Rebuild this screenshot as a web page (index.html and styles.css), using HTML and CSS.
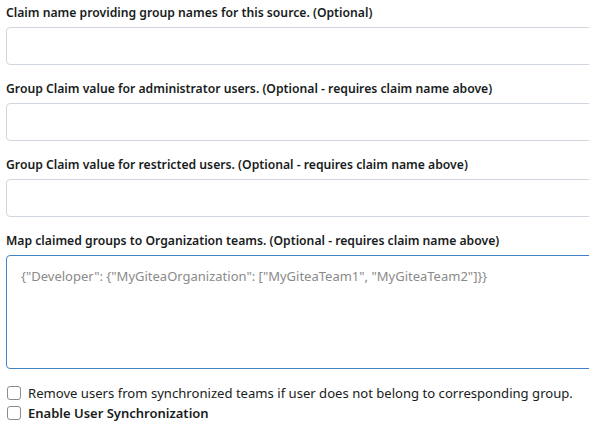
FILE: index.html
```html
<!DOCTYPE html>
<html>

<head>
    <meta charset="utf-8">
    <meta name="viewport" content="width=device-width,initial-scale=1.0">
    <title>Group claims</title>
    <link rel="stylesheet" href="styles.css">
</head>

<body>
    <form class="form">
        <div class="field">
            <label for="group_claim_name">Claim name providing group names for this source. (Optional)</label>
            <input id="group_claim_name" type="text">
        </div>
        <div class="field">
            <label for="admin_group">Group Claim value for administrator users. (Optional - requires claim name above)</label>
            <input id="admin_group" type="text">
        </div>
        <div class="field">
            <label for="restricted_group">Group Claim value for restricted users. (Optional - requires claim name above)</label>
            <input id="restricted_group" type="text">
        </div>
        <div class="field last">
            <label for="group_team_map">Map claimed groups to Organization teams. (Optional - requires claim name above)</label>
            <textarea id="group_team_map" class="focused" placeholder='{"Developer": {"MyGiteaOrganization": ["MyGiteaTeam1", "MyGiteaTeam2"]}}'></textarea>
        </div>
        <div class="checks">
            <label class="checkbox">
                <input type="checkbox">
                <span>Remove users from synchronized teams if user does not belong to corresponding group.</span>
            </label>
            <label class="checkbox strong">
                <input type="checkbox">
                <span>Enable User Synchronization</span>
            </label>
        </div>
    </form>
</body>

</html>
```

FILE: styles.css
```css
html,
body {
    margin: 0;
    padding: 0;
    overflow: hidden;
}

body {
    font-family: "Segoe UI", "Noto Sans", sans-serif;
    font-size: 12.2px;
    color: #181c21;
    background: #fff;
}

.form {
    width: 660px;
    padding: 4px 0 0 6px;
}

.field {
    margin-bottom: 15px;
}

.field.last {
    margin-bottom: 14px;
}

.field>label {
    display: block;
    font-weight: 600;
    line-height: 18px;
    margin-bottom: 5px;
}

.field input,
.field textarea {
    display: block;
    box-sizing: border-box;
    width: 100%;
    height: 38px;
    margin: 0;
    padding: 9px 14px;
    border: 1px solid #d0d7de;
    border-radius: 4px;
    font: inherit;
    font-size: 13px;
    color: #181c21;
    background: #fff;
    outline: none;
}

.field textarea {
    height: 114px;
    padding: 10px 14px;
    line-height: 20px;
    resize: none;
}

.field textarea.focused {
    border-color: #4183c4;
}

.field textarea::placeholder {
    color: #8a8a8a;
}

.checkbox {
    display: flex;
    align-items: center;
    gap: 7px;
    height: 20px;
    font-size: 13.1px;
}

.checkbox input {
    appearance: none;
    box-sizing: border-box;
    width: 14px;
    height: 14px;
    margin: 0 0 0 1px;
    border: 1px solid #8c8c8c;
    border-radius: 3px;
    background: #fff;
}

.checkbox.strong {
    font-weight: 600;
    font-size: 13px;
}
```
